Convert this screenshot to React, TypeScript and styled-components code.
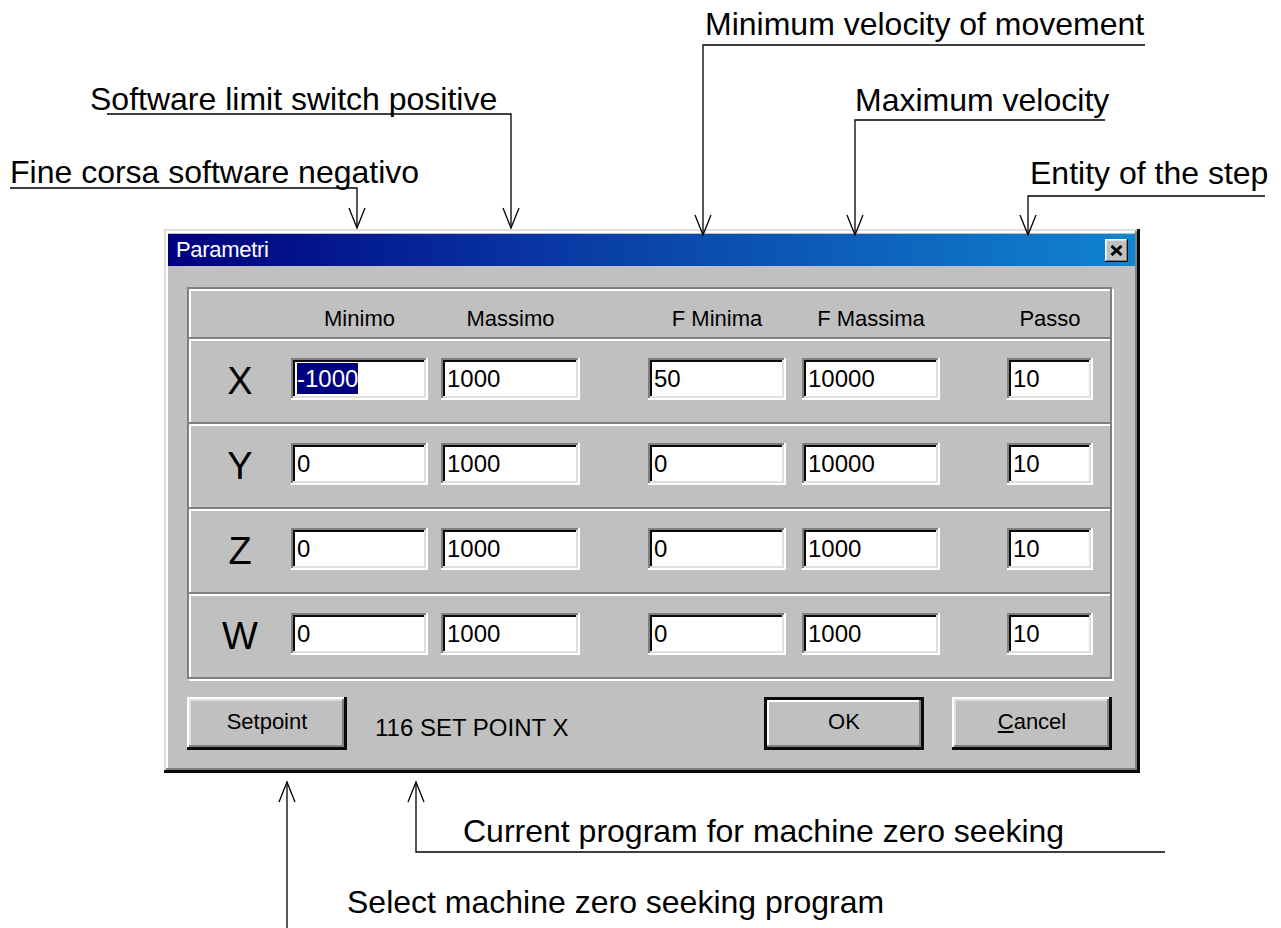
import styled, { createGlobalStyle } from "styled-components";

const GlobalStyle = createGlobalStyle`
  html, body {
    margin: 0;
    padding: 0;
    background: #fff;
  }
  body {
    font-family: "Liberation Sans", Arial, sans-serif;
  }
`;

type Col = { w: number; gap: number; label: string };

const COLS: Col[] = [
  { w: 137, gap: 13, label: "Minimo" },
  { w: 139, gap: 68, label: "Massimo" },
  { w: 138, gap: 16, label: "F Minima" },
  { w: 138, gap: 67, label: "F Massima" },
  { w: 86, gap: 0, label: "Passo" },
];

const ROWS = [
  { axis: "X", values: ["-1000", "1000", "50", "10000", "10"] },
  { axis: "Y", values: ["0", "1000", "0", "10000", "10"] },
  { axis: "Z", values: ["0", "1000", "0", "1000", "10"] },
  { axis: "W", values: ["0", "1000", "0", "1000", "10"] },
];

// callouts: text position, leader line (polyline) and arrow tip direction
const CALLOUTS = [
  { text: "Minimum velocity of movement", x: 705, y: 9, line: "1145,45 703,45 703,235", tip: [703, 235], up: false },
  { text: "Software limit switch positive", x: 90, y: 84, line: "107,114 511,114 511,228", tip: [511, 228], up: false },
  { text: "Maximum velocity", x: 855, y: 85, line: "1105,120 855,120 855,235", tip: [855, 235], up: false },
  { text: "Fine corsa software negativo", x: 10, y: 157, line: "10,188 357,188 357,228", tip: [357, 228], up: false },
  { text: "Entity of the step", x: 1030, y: 158, line: "1265,196 1028,196 1028,235", tip: [1028, 235], up: false },
  { text: "Current program for machine zero seeking", x: 463, y: 816, line: "1165,852 416,852 416,782", tip: [416, 782], up: true },
  { text: "Select machine zero seeking program", x: 347, y: 887, line: "287,928 287,782", tip: [287, 782], up: true },
];

function arrowHead(tip: number[], up: boolean) {
  const [x, y] = tip;
  const d = up ? 20 : -20;
  return `${x - 8},${y + d} ${x},${y} ${x + 8},${y + d}`;
}

export default function App() {
  return (
    <>
      <GlobalStyle />
      <Page>
        <Dialog>
          <TitleBar>
            <Title>Parametri</Title>
            <CloseButton>
              <svg width="13" height="11" viewBox="0 0 13 11">
                <path d="M1.5 1 L11.5 10 M11.5 1 L1.5 10" stroke="#000" strokeWidth="3" />
              </svg>
            </CloseButton>
          </TitleBar>
          <Body>
            <Group>
              <HeaderRow>
                <AxisCell />
                {COLS.map((c) => (
                  <HeaderCell key={c.label} $w={c.w} $gap={c.gap}>
                    {c.label}
                  </HeaderCell>
                ))}
              </HeaderRow>
              {ROWS.map((r) => (
                <AxisRow key={r.axis}>
                  <AxisCell>{r.axis}</AxisCell>
                  {COLS.map((c, i) => (
                    <Field key={c.label} $w={c.w} $gap={c.gap}>
                      {r.axis === "X" && i === 0 ? <Selected>{r.values[i]}</Selected> : r.values[i]}
                    </Field>
                  ))}
                </AxisRow>
              ))}
            </Group>
            <Footer>
              <Button>Setpoint</Button>
              <Status>116 SET POINT X</Status>
              <Spacer />
              <Button $default>OK</Button>
              <Button>
                <u>C</u>ancel
              </Button>
            </Footer>
          </Body>
        </Dialog>

        <Callouts width="1281" height="928" viewBox="0 0 1281 928">
          {CALLOUTS.map((c) => (
            <g key={c.text} fill="none" stroke="#000" strokeWidth="1.3">
              <polyline points={c.line} />
              <polyline points={arrowHead(c.tip, c.up)} />
            </g>
          ))}
        </Callouts>
        {CALLOUTS.map((c) => (
          <Label key={c.text} style={{ left: c.x, top: c.y - 1 }}>
            {c.text}
          </Label>
        ))}
      </Page>
    </>
  );
}

const Page = styled.div`
  position: relative;
  width: 1281px;
  height: 928px;
  box-sizing: border-box;
  padding: 229px 0 0 164px;
  background: #fff;
  overflow: hidden;
`;

const Dialog = styled.div`
  width: 976px;
  height: 544px;
  box-sizing: border-box;
  padding: 5px 5px 0 4px;
  background: #c0c0c0;
  display: flex;
  flex-direction: column;
  box-shadow: inset -3px -3px 0 #0a0a0a, inset 2px 2px 0 #dfdfdf, inset -5px -5px 0 #808080,
    inset 4px 4px 0 #fff;
`;

const TitleBar = styled.div`
  height: 32px;
  display: flex;
  align-items: center;
  justify-content: space-between;
  padding: 0 7px 0 8px;
  background: linear-gradient(90deg, #000080 0%, #0a3fa8 45%, #1084d0 100%);
`;

const Title = styled.span`
  color: #fff;
  font-size: 22px;
  letter-spacing: -0.3px;
`;

const CloseButton = styled.div`
  width: 23px;
  height: 23px;
  box-sizing: border-box;
  display: flex;
  align-items: center;
  justify-content: center;
  background: #c0c0c0;
  box-shadow: inset -1px -1px 0 #0a0a0a, inset 1px 1px 0 #fff, inset -2px -2px 0 #808080,
    inset 2px 2px 0 #dfdfdf;
`;

const Body = styled.div`
  padding: 21px 0 0 19px;
  display: flex;
  flex-direction: column;
`;

const Group = styled.div`
  width: 921px;
  border: 2px solid #808080;
  box-shadow: inset 2px 2px 0 #fff, 2px 2px 0 #fff;
  display: flex;
  flex-direction: column;
`;

const HeaderRow = styled.div`
  height: 48px;
  display: flex;
  align-items: flex-end;
  box-sizing: border-box;
`;

const AxisRow = styled.div`
  height: 85px;
  box-sizing: border-box;
  border-top: 2px solid #808080;
  box-shadow: inset 0 2px 0 #fff;
  display: flex;
  align-items: center;
  padding-bottom: 3px;
`;

const AxisCell = styled.div`
  width: 102px;
  flex: none;
  text-align: center;
  font-size: 38px;
  line-height: 1;
  color: #000;
  padding-top: 4px;
`;

const HeaderCell = styled.div<{ $w: number; $gap: number }>`
  width: ${(p) => p.$w}px;
  margin-right: ${(p) => p.$gap}px;
  flex: none;
  text-align: center;
  font-size: 22px;
  line-height: 1;
  padding-bottom: 7px;
  color: #000;
`;

const Field = styled.div<{ $w: number; $gap: number }>`
  width: ${(p) => p.$w}px;
  margin-right: ${(p) => p.$gap}px;
  flex: none;
  height: 42px;
  box-sizing: border-box;
  padding: 4px 4px 0 6px;
  background: #fff;
  font-size: 24px;
  line-height: 34px;
  color: #000;
  box-shadow: inset -2px -2px 0 #fff, inset 2px 2px 0 #808080, inset -4px -4px 0 #dfdfdf,
    inset 4px 4px 0 #0a0a0a;
`;

const Selected = styled.span`
  background: #000080;
  color: #fff;
  padding: 2px 0;
`;

const Footer = styled.div`
  display: flex;
  align-items: center;
  margin-top: 18px;
  width: 925px;
`;

const Spacer = styled.div`
  flex: 1;
`;

const Button = styled.div<{ $default?: boolean }>`
  width: 160px;
  height: 53px;
  box-sizing: border-box;
  display: flex;
  align-items: center;
  justify-content: center;
  margin-left: ${(p) => (p.$default ? "0" : "28px")};
  &:first-child {
    margin-left: 0;
  }
  background: #c0c0c0;
  font-size: 22px;
  color: #000;
  padding-bottom: 4px;
  box-shadow: ${(p) =>
    p.$default
      ? "inset -3px -3px 0 #0a0a0a, inset 3px 3px 0 #0a0a0a, inset -5px -5px 0 #808080, inset 5px 5px 0 #fff"
      : "inset -3px -3px 0 #0a0a0a, inset 2px 2px 0 #fff, inset -5px -5px 0 #808080, inset 4px 4px 0 #dfdfdf"};
`;

const Status = styled.span`
  margin-left: 28px;
  font-size: 24px;
  color: #000;
  padding-top: 8px;
`;

const Callouts = styled.svg`
  position: absolute;
  left: 0;
  top: 0;
  pointer-events: none;
`;

const Label = styled.div`
  position: absolute;
  font-size: 32px;
  line-height: 32px;
  color: #000;
  white-space: nowrap;
`;
